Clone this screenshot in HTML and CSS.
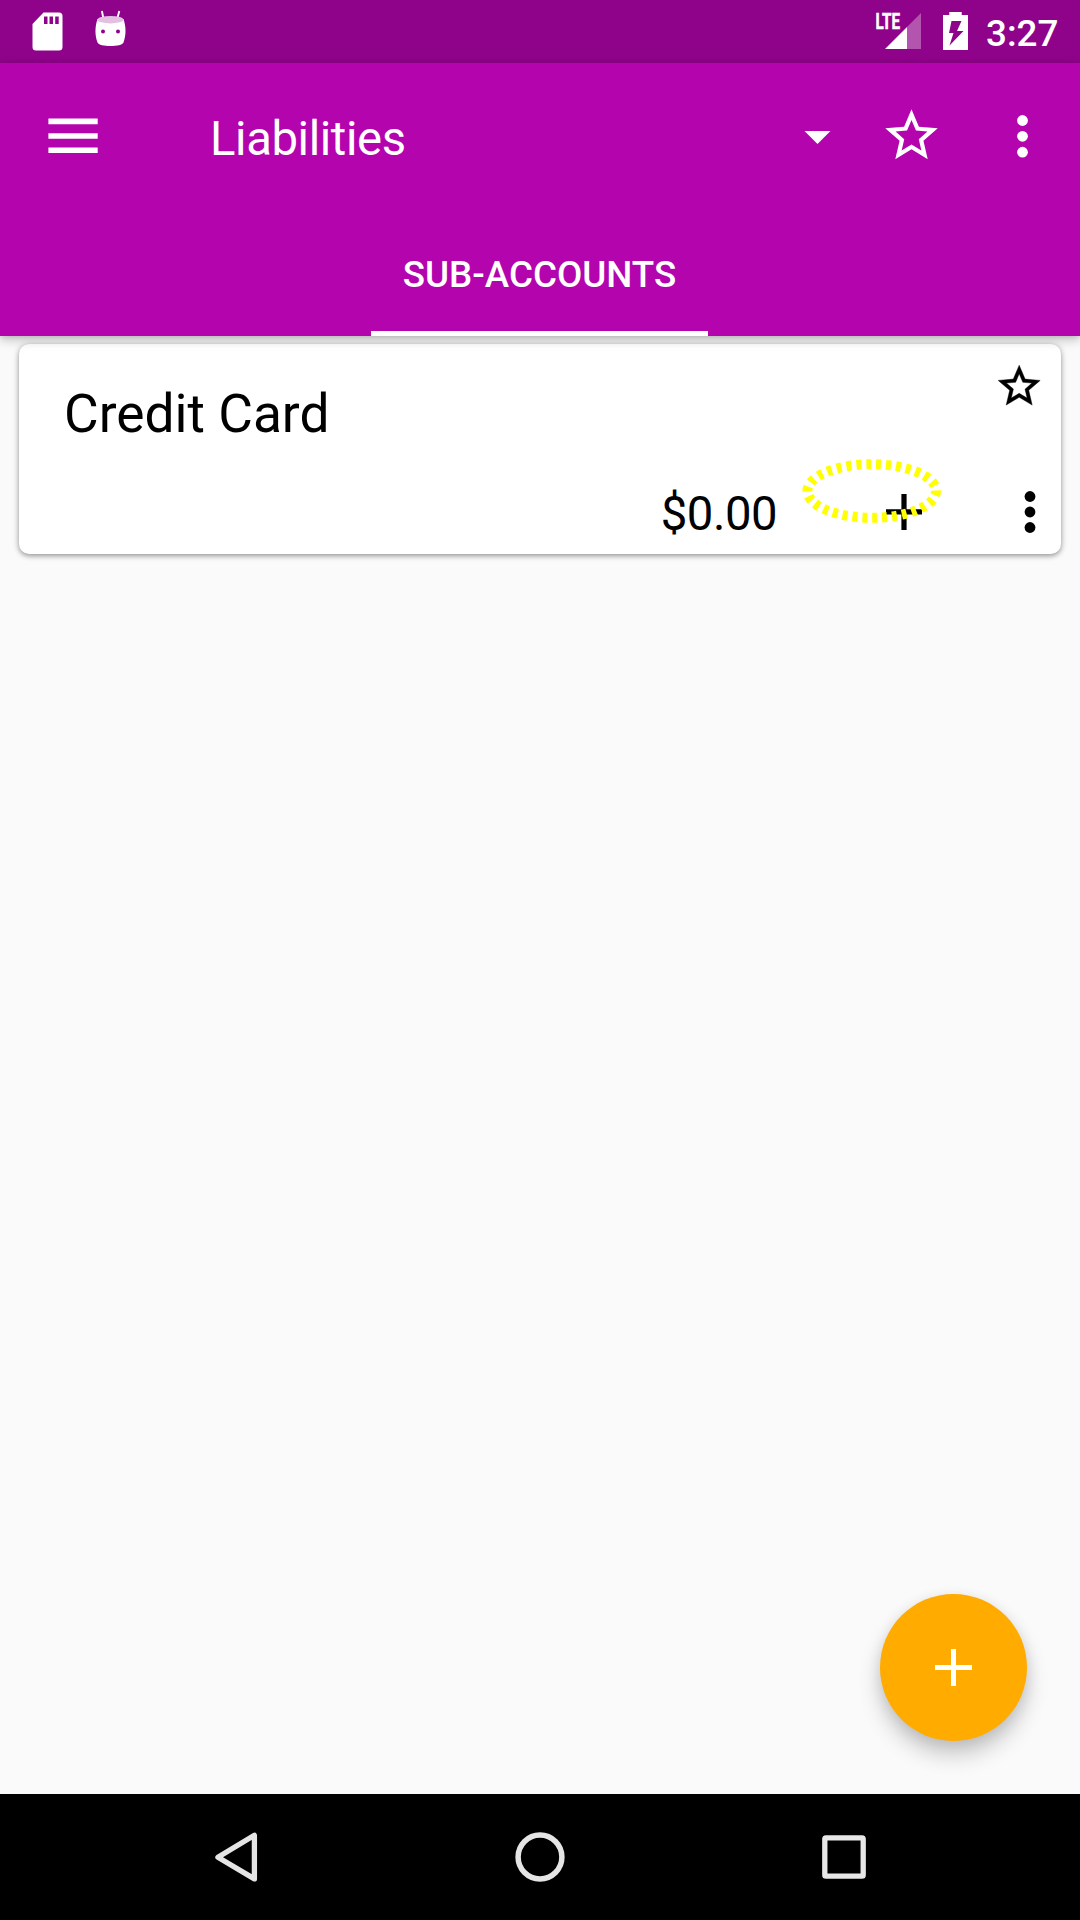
FILE: index.html
```html
<!DOCTYPE html>
<html lang="en">
<head>
<meta charset="utf-8">
<title>Liabilities</title>
<link rel="stylesheet" href="styles.css">
</head>
<body>
<div class="screen">
  <div class="status-bar">
    <svg class="status-sd" width="31" height="39" viewBox="0 0 31 39"><path fill="#fff" fill-rule="evenodd" d="M11.500 .5H27a3.500 3.500 0 0 1 3.500 3.500V35a3.500 3.500 0 0 1-3.500 3.500H4A3.500 3.500 0 0 1 .5 35V12zM12 4.500v7.500h3.500V4.500zM17.500 4.500v7.500h3.500V4.500zM23.200 4.500v7.500h3.500V4.500z"/></svg>
    <svg class="status-android" width="31" height="37" viewBox="0 0 31 37"><g stroke="#fff" stroke-width="1.900"><path d="M6.900 1L8.500 9M24.300 1L22.200 9"/></g><path fill="#fff" d="M2.500 9C-.2 17-.2 25 2.500 32.500 4 37.200 27 37.200 28.500 32.500 31.200 25 31.200 17 28.500 9z"/><ellipse cx="15.500" cy="9.700" rx="13" ry="3.700" fill="#e3bfe1"/><circle cx="8" cy="21.500" r="2" fill="#8f038a"/><circle cx="23" cy="21.500" r="2" fill="#8f038a"/></svg>
    <svg class="status-signal" width="46" height="38" viewBox="0 0 46 38"><path fill="#fff" fill-opacity=".32" d="M32 15L46 1V37H32z"/><path fill="#fff" d="M10 37L32 15V37z"/><text class="lte" x=".5" y="17" textLength="24.500" lengthAdjust="spacingAndGlyphs">LTE</text></svg>
    <svg class="status-battery" width="25" height="38" viewBox="0 0 25 38"><path fill="#fff" fill-rule="evenodd" d="M6.300 0H18.700V3H25V38H0V3H6.300zM8.500 9L6 21H10.500L6.500 33.500 20.500 19H14L18.500 9z"/></svg>
    <span class="clock">3:27</span>
  </div>
  <header class="app-bar">
    <div class="toolbar">
      <svg class="menu" width="50" height="36" viewBox="0 0 50 36"><path fill="#fff" d="M.4 .6H49.700V6.200H.4zM.4 15.300H49.700V20.800H.4zM.4 29.500H49.700V35H.4z"/></svg>
      <h1 class="title">Liabilities</h1>
      <svg class="caret" width="26" height="13" viewBox="0 0 26 13"><path fill="#fff" d="M.5 0H26.500L13.500 13z"/></svg>
      <svg class="star" width="63" height="63" viewBox="0 0 24 24"><path fill="#fff" d="M22 9.240l-7.190-.620L12 2 9.190 8.630 2 9.240l5.460 4.730L5.820 21 12 17.270 18.180 21l-1.630-7.030L22 9.240zM12 15.400l-3.760 2.270 1-4.280-3.320-2.880 4.380-.38L12 6.100l1.710 4.040 4.380.38-3.320 2.880 1 4.280L12 15.400z"/></svg>
      <svg class="more" width="12" height="44" viewBox="0 0 12 44"><g fill="#fff"><circle cx="6.500" cy="6.500" r="5.400"/><circle cx="6.500" cy="22.300" r="5.400"/><circle cx="6.500" cy="38.200" r="5.400"/></g></svg>
    </div>
    <nav class="tabs"><span class="tab">SUB-ACCOUNTS</span></nav>
  </header>
  <main class="content">
    <section class="card">
      <div class="card-head">
        <h2 class="account">Credit Card</h2>
        <svg class="favorite" width="50.400" height="50.400" viewBox="0 0 24 24"><path stroke="#000" stroke-width=".2" d="M22 9.240l-7.190-.620L12 2 9.190 8.630 2 9.240l5.460 4.730L5.820 21 12 17.270 18.180 21l-1.630-7.030L22 9.240zM12 15.400l-3.760 2.270 1-4.280-3.320-2.880 4.380-.38L12 6.100l1.710 4.040 4.380.38-3.320 2.880 1 4.280L12 15.400z"/></svg>
      </div>
      <div class="card-actions">
        <span class="balance">$0.00</span>
        <svg class="add" width="140" height="72" viewBox="0 0 140 72"><path d="M85 50.200H100.400V35H105.600V50.200H121V55.400H105.600V71H100.400V55.400H85z"/><ellipse cx="70.700" cy="32" rx="64.300" ry="26.800" fill="none" stroke="#ff0" stroke-width="10" pathLength="60" stroke-dasharray="1 1" stroke-dashoffset=".1"/></svg>
        <svg class="card-more" width="12" height="44" viewBox="0 0 12 44"><circle cx="6" cy="6.500" r="5.400"/><circle cx="6" cy="22" r="5.400"/><circle cx="6" cy="37.500" r="5.400"/></svg>
      </div>
    </section>
    <button class="fab" aria-label="Add"><svg width="37" height="37" viewBox="0 0 37 37"><path fill="#fff" d="M0 16H16V0H21V16H37V21H21V37H16V21H0z"/></svg></button>
  </main>
  <nav class="nav-bar">
    <svg class="back" width="43" height="50" viewBox="0 0 43 50"><path fill="none" stroke="#e5e5e5" stroke-width="5.300" stroke-linejoin="round" d="M2.900 25.300L39.400 3.300V46.900z"/></svg>
    <svg class="home" width="50" height="50" viewBox="0 0 50 50"><circle cx="25" cy="25" r="21.900" fill="none" stroke="#e5e5e5" stroke-width="5.500"/></svg>
    <svg class="recent" width="44" height="44" viewBox="0 0 44 44"><rect x="2.800" y="2.800" width="38.400" height="38.400" rx="1.200" fill="none" stroke="#e8e8e8" stroke-width="5.300"/></svg>
  </nav>
</div>
</body>
</html>
```
FILE: styles.css
```css
* { box-sizing: border-box; }
body { margin: 0; font-family: Roboto, "Liberation Sans", sans-serif; }
svg { display: block; flex: none; overflow: visible; }
h1, h2 { margin: 0; font-weight: 400; white-space: nowrap; }
.screen { width: 1080px; height: 1920px; display: flex; flex-direction: column; background: #fafafa; overflow: hidden; }

.status-bar { height: 63px; flex: none; display: flex; align-items: flex-start; background: #8f038a; color: #fff; }
.status-sd { margin: 12px 0 0 32px; }
.status-android { margin: 10px 0 0 32px; }
.status-signal { margin: 12px 0 0 749px; }
.status-battery { margin: 12px 0 0 22px; }
.lte { font-size: 22.500px; font-weight: 700; fill: #fff; stroke: #fff; stroke-width: .6px; }
.clock { margin: 12px 0 0 18px; font-size: 36.750px; line-height: 43px; font-weight: 500; }

.app-bar { height: 273px; flex: none; display: flex; flex-direction: column; justify-content: space-between; background: #b304ad; color: #fff; position: relative; z-index: 1; box-shadow: 0 4px 10px rgba(0, 0, 0, .22), 0 1px 4px rgba(0, 0, 0, .1); }
.toolbar { height: 147px; display: flex; align-items: flex-start; }
.menu { margin: 55px 0 0 48px; }
.title { flex: 1; margin: 48px 0 0 112px; font-size: 47.250px; line-height: 56px; letter-spacing: -.4px; }
.caret { margin: 68px 0 0; }
.star { margin: 41px 0 0 50px; }
.more { margin: 51px 52px 0 73px; }
.tabs { display: flex; justify-content: center; padding-right: 1px; }
.tab { width: 337px; height: 126px; padding-top: 43px; border-bottom: 5px solid #fff; text-align: center; font-size: 36.750px; line-height: 44px; font-weight: 500; white-space: nowrap; }

.content { flex: 1; display: flex; flex-direction: column; justify-content: space-between; padding: 8px 19px 53px; }
.card { height: 210px; display: flex; flex-direction: column; background: #fff; border-radius: 10px; box-shadow: 0 2px 5px rgba(0, 0, 0, .34), 0 0 9px rgba(0, 0, 0, .12); }
.card-head { height: 110px; display: flex; align-items: flex-start; justify-content: space-between; padding: 17px 17px 0 45px; }
.account { margin-top: 22px; font-size: 53.300px; line-height: 62px; }
.card-actions { height: 100px; display: flex; align-items: flex-start; justify-content: flex-end; padding-right: 25px; }
.balance { margin-top: 32px; font-size: 47.250px; line-height: 56px; letter-spacing: -.5px; }
.add { margin: 5px 0 0 24px; }
.card-more { margin: 36px 0 0 83px; }
.fab { align-self: flex-end; width: 147px; height: 147px; margin-right: 34px; padding: 0; display: flex; align-items: center; justify-content: center; border: 0; border-radius: 50%; background: #ffab00; box-shadow: 0 14px 22px rgba(0, 0, 0, .2), 0 3px 14px rgba(0, 0, 0, .09); }

.nav-bar { height: 126px; flex: none; display: flex; align-items: center; background: #000; }
.back { margin-left: 215px; }
.home { margin-left: 257px; }
.recent { margin-left: 257px; }
```
